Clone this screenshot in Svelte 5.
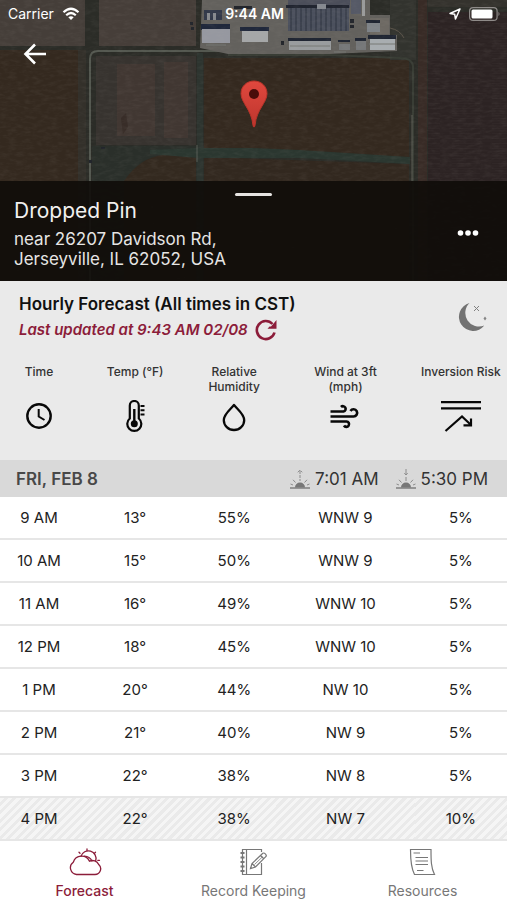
<script lang="ts">
  type Hour = {
    time: string;
    temp: number;
    humidity: number;
    wind: string;
    risk: number;
  };

  let hours: Hour[] = [
    { time: "9 AM", temp: 13, humidity: 55, wind: "WNW 9", risk: 5 },
    { time: "10 AM", temp: 15, humidity: 50, wind: "WNW 9", risk: 5 },
    { time: "11 AM", temp: 16, humidity: 49, wind: "WNW 10", risk: 5 },
    { time: "12 PM", temp: 18, humidity: 45, wind: "WNW 10", risk: 5 },
    { time: "1 PM", temp: 20, humidity: 44, wind: "NW 10", risk: 5 },
    { time: "2 PM", temp: 21, humidity: 40, wind: "NW 9", risk: 5 },
    { time: "3 PM", temp: 22, humidity: 38, wind: "NW 8", risk: 5 },
    { time: "4 PM", temp: 22, humidity: 38, wind: "NW 7", risk: 10 },
  ];
</script>

<div class="app">
  <header class="hero">
    <svg class="map" viewBox="0 0 507 281" preserveAspectRatio="xMidYMin slice" aria-hidden="true">
      <defs>
        <filter id="grain" x="0" y="0" width="100%" height="100%">
          <feTurbulence type="fractalNoise" baseFrequency="0.12 0.3" numOctaves="3" seed="4" />
          <feColorMatrix values="0 0 0 0 0.5  0 0 0 0 0.46  0 0 0 0 0.42  0.5 0 0 0 -0.2" />
        </filter>
        <pattern id="furrows" width="40" height="5" patternUnits="userSpaceOnUse">
          <path d="M0 1H26M12 3.500H40" stroke="#3a302f" stroke-width="1" />
        </pattern>
        <pattern id="roof" width="5" height="24" patternUnits="userSpaceOnUse">
          <path d="M1 0V24" stroke="#2c313d" stroke-width="1" />
        </pattern>
      </defs>
      <rect width="507" height="281" fill="#2b2c27" />
      <!-- fields -->
      <path d="M0 0H85V46H0Z" fill="#453e39" />
      <path d="M99 0H196V46H99Z" fill="#463e39" />
      <path d="M0 50H84V281H0Z" fill="#34291f" />
      <path d="M78 50H86V281H78Z" fill="#33302a" />
      <path d="M96 56H196V145H96Z" fill="#37332f" />
      <path d="M117 64H155V136H117ZM164 62H188V138H164Z" fill="#413732" />
      <path d="M121 118l5-5 2 14-5 7z" fill="#382d28" />
      <path d="M92 146H204V281H92Z" fill="#2a2f2a" />
      <path d="M124 181Q140 157 164 155L196 154V281H124Z" fill="#33291f" />
      <path d="M204 58H409V158L204 148Z" fill="#34291f" />
      <path d="M204 157L409 164V281H204Z" fill="#32281f" />
      <path d="M197 53H203V281H197Z" fill="#2d342f" />
      <path d="M198 148H252L300 150L410 157V164L300 158H198L150 154V150Z" fill="#2b3730" />
      <path d="M418 0H427V281H418Z" fill="#382b26" />
      <path d="M428 12H507V281H428Z" fill="#2c2323" />
      <path d="M428 20H507V181H428Z" fill="url(#furrows)" opacity="0.3" />
      <path d="M390 0H416V60H390Z" fill="#32332e" />
      <path d="M428 0H507V7H428Z" fill="#34322d" />
      <!-- roads -->
      <path d="M90 281V59Q90 51 98 51H228" fill="none" stroke="#545850" stroke-width="2" />
      <path d="M228 55H330L400 58Q412 58 413 66V281" fill="none" stroke="#393d35" stroke-width="2" />
      <path d="M412 115V181" stroke="#5c5c54" stroke-width="1" />
      <path d="M197 145V162" stroke="#565d55" stroke-width="1" />
      <path d="M390 28Q400 30 404 38" fill="none" stroke="#5a5349" stroke-width="1" />
      <!-- farm yard -->
      <path d="M202 0H370V15H390V35H397V51L330 54L228 54L200 48Z" fill="#63615d" />
      <path d="M370 18H389V34H370Z" fill="#6d6963" />
      <path d="M288 0H350V8H288Z" fill="#4b4e5a" />
      <path d="M288 7H349V31H288Z" fill="#4b505d" />
      <path d="M288 7H349V31H288Z" fill="url(#roof)" />
      <path d="M286 5H349V8H286Z" fill="#20242f" />
      <path d="M317 4H326V9H317Z" fill="#858990" />
      <path d="M351 0H361V14H351Z" fill="#555966" />
      <path d="M362 0H365V16H362Z" fill="#9a9b9b" />
      <path d="M204 10H222V20H204Z" fill="#32394a" />
      <path d="M207 13h3v7h-3zM213 13h3v7h-3z" fill="#86898e" />
      <path d="M201 24H230V30H201ZM240 27H269V31H240Z" fill="#20283b" />
      <path d="M202 29H230V43H202Z" fill="#9698a0" />
      <path d="M242 31H268V42H242Z" fill="#a5a7a8" />
      <path d="M288 38H331V41H288ZM338 40H350V42H338ZM355 38H366V41H355ZM368 35H396V39H368ZM366 20H380V23H366Z" fill="#1f2532" />
      <path d="M289 41H331V50H289Z" fill="#999c9e" />
      <path d="M339 44H350V50H339ZM356 41H366V50H356Z" fill="#757779" />
      <path d="M370 39H395V50H370Z" fill="#a8adb0" />
      <path d="M367 23H380V32H367Z" fill="#7e8388" />
      <path d="M350 19h4v4h-4zM350 25h4v3h-4zM234 6h18v3h-18zM281 41h3v4h-3zM190 22h3v3h-3zM191 27h3v3h-3zM101 147h4v2h-4zM89 160h3v3h-3z" fill="#22252b" />
      <path d="M290 46H330M206 45H226M334 52H346M369 44H395" stroke="#777875" stroke-width="1" />
      <rect width="507" height="281" filter="url(#grain)" opacity="0.3" />
    </svg>

    <svg class="pin" width="28" height="48" viewBox="0 0 28 48" role="img" aria-label="Dropped pin">
      <defs>
        <linearGradient id="pinFill" x1="0" y1="0" x2="0" y2="1">
          <stop offset="0" stop-color="#e0483e" />
          <stop offset="1" stop-color="#bd352d" />
        </linearGradient>
      </defs>
      <path d="M14 1C6.500 1 1 6.500 1 13.500C1 23 11.500 29 13 45.500C13.200 47.500 14.800 47.500 15 45.500C16.500 29 27 23 27 13.500C27 6.500 21.500 1 14 1Z" fill="url(#pinFill)" stroke="#b93329" stroke-width="1" />
      <circle cx="14" cy="14" r="5" fill="#4a0d0a" />
    </svg>

    <div class="status">
      <div class="status-left">
        <span>Carrier</span>
        <svg width="18" height="14" viewBox="0 0 18 14" aria-hidden="true">
          <path d="M1.500 5.200Q9 -1.700 16.500 5.200M4.200 8.200Q9 3.800 13.800 8.200" fill="none" stroke="#fff" stroke-width="2.200" />
          <path d="M6.300 10.300Q9 8.200 11.700 10.300L9 13Z" fill="#fff" />
        </svg>
      </div>
      <span class="clock">9:44 AM</span>
      <div class="status-right">
        <svg width="12" height="12" viewBox="0 0 12 12" aria-hidden="true">
          <path d="M11 1L1 5.500L5.700 6.300L6.500 11Z" fill="none" stroke="#fff" stroke-width="1.500" stroke-linejoin="round" />
        </svg>
        <svg width="32" height="14" viewBox="0 0 32 14" aria-hidden="true">
          <rect x="0.600" y="0.600" width="27.500" height="12.800" rx="3.500" fill="none" stroke="#8f8b89" stroke-width="1.200" />
          <rect x="2.500" y="2.500" width="21" height="9" rx="1.500" fill="#fff" />
          <path d="M29.500 4.800Q31.500 7 29.500 9.200Z" fill="#8f8b89" />
        </svg>
      </div>
    </div>

    <button class="back" aria-label="Back">
      <svg width="24" height="24" viewBox="0 0 24 24" aria-hidden="true">
        <path d="M23 12H3M12 2.500L2.500 12L12 21.500" fill="none" stroke="#fff" stroke-width="2.600" />
      </svg>
    </button>

    <div class="place">
      <button class="handle" aria-label="Expand map"></button>
      <div class="place-row">
        <div>
          <h1>Dropped Pin</h1>
          <p>near 26207 Davidson Rd,<br />Jerseyville, IL 62052, USA</p>
        </div>
        <button class="more" aria-label="More options">
          <svg width="22" height="8" viewBox="0 0 22 8" aria-hidden="true">
            <g fill="#fff">
              <circle cx="3.500" cy="4" r="2.800" />
              <circle cx="11" cy="4" r="2.800" />
              <circle cx="18.500" cy="4" r="2.800" />
            </g>
          </svg>
        </button>
      </div>
    </div>
  </header>

  <main>
    <div class="summary">
      <div>
        <h2>Hourly Forecast (All times in CST)</h2>
        <div class="updated">
          <span>Last updated at 9:43 AM 02/08</span>
          <button class="refresh" aria-label="Refresh">
            <svg width="22" height="22" viewBox="0 0 22 22" aria-hidden="true">
              <path d="M19.500 13.500A9 9 0 1 1 17.500 5" fill="none" stroke="#8c1d3a" stroke-width="2.600" />
              <path d="M21.500 1V9.800H12.500L14.500 7.600H16L19 4Z" fill="#8c1d3a" />
            </svg>
          </button>
        </div>
      </div>
      <svg width="30" height="30" viewBox="0 0 30 30" role="img" aria-label="Clear night">
        <path d="M11.500 1A14.200 14.200 0 1 0 26.300 23.500A13.700 13.700 0 0 1 11.500 1Z" fill="#727272" />
        <path d="M16 4L21 9M21 4L16 9" stroke="#808080" stroke-width="1" />
        <path d="M27 14.500l1.500 2-1.500 2-1.500-2z" fill="#858585" />
      </svg>
    </div>

    <table>
      <colgroup>
        <col class="col-time" />
        <col class="col-temp" />
        <col class="col-humidity" />
        <col class="col-wind" />
        <col />
      </colgroup>
      <thead>
        <tr class="labels">
          <th scope="col">Time</th>
          <th scope="col">Temp (°F)</th>
          <th scope="col">Relative<br />Humidity</th>
          <th scope="col">Wind at 3ft<br />(mph)</th>
          <th scope="col">Inversion Risk</th>
        </tr>
        <tr class="icons">
          <td>
            <svg width="42" height="32" viewBox="0 0 42 32" aria-hidden="true">
              <circle cx="21" cy="16" r="11.700" fill="none" stroke="#080808" stroke-width="2.400" />
              <path d="M20.700 9V16.500L26.500 20" fill="none" stroke="#080808" stroke-width="2" />
            </svg>
          </td>
          <td>
            <svg width="42" height="32" viewBox="0 0 42 32" aria-hidden="true">
              <path d="M15.800 18.500V5.500A4.500 4.500 0 0 1 24.800 5.500V18.500A7 7 0 1 1 15.800 18.500Z" fill="none" stroke="#080808" stroke-width="2.200" />
              <path d="M20.300 9V24" stroke="#080808" stroke-width="2.400" />
              <circle cx="20.300" cy="23.800" r="3.500" fill="#080808" />
              <path d="M26.500 6H30.500M26.500 10.300H30.500M26.500 14.600H30.500" stroke="#080808" stroke-width="2" />
            </svg>
          </td>
          <td>
            <svg width="42" height="32" viewBox="0 0 42 32" aria-hidden="true">
              <path d="M21 5C17.500 9.500 10.800 14 10.800 20.200A10.200 9.800 0 0 0 31.200 20.200C31.200 14 24.500 9.500 21 5Z" fill="none" stroke="#080808" stroke-width="2.300" stroke-linejoin="round" />
            </svg>
          </td>
          <td>
            <svg width="42" height="32" viewBox="0 0 42 32" aria-hidden="true">
              <g fill="none" stroke="#080808" stroke-width="2.600">
                <path d="M6.500 11.500H19.500A2.700 2.700 0 1 0 17 7" />
                <path d="M6.500 16.500H29.500A3.600 3.600 0 1 0 26.500 11" />
                <path d="M6.500 21.500H22.500A2.700 2.700 0 1 1 20 25.500" />
              </g>
            </svg>
          </td>
          <td>
            <svg width="42" height="32" viewBox="0 0 42 32" aria-hidden="true">
              <path d="M1 2.200H41M1 8.400H41" stroke="#080808" stroke-width="2.200" />
              <path d="M5.500 31L22 16.500L30.500 24.500M31 18.500V25.300H23.500" fill="none" stroke="#080808" stroke-width="2.200" />
            </svg>
          </td>
        </tr>
      </thead>
      <tbody>
        <tr class="day">
          <th colspan="5" scope="rowgroup">
            <div class="day-bar">
              <span class="date">FRI, FEB 8</span>
              <span class="sun">
                <svg width="20" height="20" viewBox="0 0 20 20" role="img" aria-label="Sunrise">
                  <path d="M0 19H20" stroke="#777" stroke-width="1.400" />
                  <path d="M5 18.500A5 5 0 0 1 15 18.500Z" fill="#777" />
                  <path d="M10 2V12M7.800 3.300L10 1L12.200 3.300" fill="none" stroke="#8c8c8c" stroke-width="1" stroke-dasharray="3 1" />
                  <path d="M5.500 13.500L3 10.800M14.500 13.500L17 10.800M3 16L0.500 15M17 16L19.500 15" stroke="#8c8c8c" stroke-width="1" />
                </svg>
                7:01 AM
              </span>
              <span class="sun">
                <svg width="20" height="20" viewBox="0 0 20 20" role="img" aria-label="Sunset">
                  <path d="M0 19H20" stroke="#777" stroke-width="1.400" />
                  <path d="M5 18.500A5 5 0 0 1 15 18.500Z" fill="#777" />
                  <path d="M10 0V6M10 8V12M8.300 4.200L10 6L11.700 4.200" fill="none" stroke="#8c8c8c" stroke-width="1" />
                  <path d="M5.500 13.500L3 10.800M14.500 13.500L17 10.800M3 16L0.500 15M17 16L19.500 15" stroke="#8c8c8c" stroke-width="1" />
                </svg>
                5:30 PM
              </span>
            </div>
          </th>
        </tr>
        {#each hours as hour}
          <tr class="hour" class:striped={hour.risk >= 10}>
            <th scope="row">{hour.time}</th>
            <td>{hour.temp}°</td>
            <td>{hour.humidity}%</td>
            <td>{hour.wind}</td>
            <td>{hour.risk}%</td>
          </tr>
        {/each}
      </tbody>
    </table>
  </main>

  <nav>
    <a href="#forecast" class="active" aria-current="page">
      <svg width="34" height="28" viewBox="0 0 34 28" aria-hidden="true">
        <g fill="none" stroke="currentColor" stroke-width="1.300" stroke-linecap="round">
          <path d="M8.500 26.500A6.800 6.800 0 0 1 5.300 14.200A8.700 8.700 0 0 1 21.500 13.200A6.800 6.800 0 0 1 30.700 16.500A5.700 5.700 0 0 1 27 26.500Z" />
          <path d="M13 8.300A7.300 7.300 0 0 1 27.700 12.700" />
          <path d="M16.500 8.200A9 9 0 0 1 24 13" />
          <path d="M19 1V2.500M11 4.300L12 5.300M27.500 4.300L26.500 5.300M29.800 12.300H31.500" />
        </g>
      </svg>
      Forecast
    </a>
    <a href="#records">
      <svg width="34" height="28" viewBox="0 0 34 28" aria-hidden="true">
        <g fill="none" stroke="currentColor" stroke-width="1.200">
          <path d="M24.500 4V1.500H5.500V26.500H24.500V15" />
          <path d="M9.500 1.500V26.500" />
          <path d="M3.500 5H7.500M3.500 9.500H7.500M3.500 14H7.500M3.500 18.500H7.500M3.500 23H7.500" stroke-width="1.800" />
          <path d="M13.500 20.500L15 15.500L25.800 5.300Q27 4.500 28.300 5.800Q30 7.500 28.800 8.700L18.500 19L13.500 20.500ZM15 15.500L18.500 19M23.500 7.500L26.800 10.700" />
          <path d="M17.500 16.500L25.500 8.800" stroke-width="0.800" />
        </g>
      </svg>
      Record Keeping
    </a>
    <a href="#resources">
      <svg width="34" height="28" viewBox="0 0 34 28" aria-hidden="true">
        <g fill="none" stroke="currentColor" stroke-width="1.200">
          <path d="M4.500 1.500H25C25 12 25 20 28.500 26.500H8.500C5 20 4.500 10 4.500 1.500Z" />
          <path d="M7.500 5H14M9.500 9.500H22M9.500 13H22M9.500 16.500H22M11 22.500H17.500" />
        </g>
      </svg>
      Resources
    </a>
  </nav>
</div>

<style>
  :global(body) {
    background: #fff;
    font-family: Inter, "Liberation Sans", sans-serif;
  }
  .app {
    display: flex;
    flex-direction: column;
    min-height: 100vh;
    color: #1c1c1c;
  }
  button {
    border: 0;
    padding: 0;
    background: none;
    cursor: pointer;
  }
  svg {
    display: block;
    flex-shrink: 0;
  }
  h1, h2, p {
    margin: 0;
  }
  .hero {
    position: relative;
    display: flex;
    flex-direction: column;
    color: #fff;
    overflow: hidden;
    background: #2b2c27;
  }
  .map {
    position: absolute;
    top: 0;
    left: 0;
    width: 100%;
    height: 100%;
  }
  .pin {
    position: absolute;
    top: 80px;
    left: 50%;
    transform: translateX(-50%);
  }
  .status {
    position: relative;
    display: grid;
    grid-template-columns: 1fr auto 1fr;
    align-items: center;
    padding: 5px 6px 3px 8px;
    font-size: 14px;
    line-height: 18px;
  }
  .status-left, .status-right {
    display: flex;
    align-items: center;
    gap: 8px;
  }
  .status-right {
    justify-content: flex-end;
  }
  .clock {
    font-weight: 600;
  }
  .back {
    position: relative;
    align-self: flex-start;
    margin: 16px 23px 115px;
  }
  .place {
    position: relative;
    display: flex;
    flex-direction: column;
    padding: 12px 28px 12px 14px;
    background: rgba(15, 12, 9, 0.9);
  }
  .handle {
    align-self: center;
    width: 37px;
    height: 3px;
    border-radius: 2px;
    background: #e6e4e2;
    margin-left: 14px;
  }
  .place-row {
    display: flex;
    align-items: center;
    justify-content: space-between;
    padding-top: 1px;
  }
  h1 {
    font-size: 21px;
    line-height: 28px;
    font-weight: 400;
    color: #f1f0ef;
    margin-bottom: 4px;
  }
  .place p {
    font-size: 17px;
    line-height: 20px;
    color: #e6e5e4;
  }
  .summary {
    display: flex;
    justify-content: space-between;
    align-items: center;
    padding: 12px 19px 8px;
    background: #eaeaea;
  }
  h2 {
    font-size: 17px;
    line-height: 22px;
    font-weight: 600;
    color: #111;
  }
  .updated {
    display: flex;
    align-items: center;
    gap: 7px;
    margin-top: 4px;
    font-size: 15px;
    line-height: 22px;
    font-weight: 600;
    font-style: italic;
    color: #8c1d3a;
  }
  table {
    width: 100%;
    table-layout: fixed;
    border-collapse: separate;
    border-spacing: 0;
    text-align: center;
  }
  .col-time {
    width: 15.4%;
  }
  .col-temp {
    width: 22.5%;
  }
  .col-humidity {
    width: 16.6%;
  }
  .col-wind {
    width: 27.3%;
  }
  th, td {
    padding: 0;
  }
  thead {
    background: #eaeaea;
  }
  .labels th {
    height: 45px;
    padding-top: 15px;
    box-sizing: border-box;
    vertical-align: top;
    font-size: 12px;
    line-height: 15px;
    font-weight: 500;
    color: #333;
    white-space: nowrap;
  }
  .icons td {
    padding: 6px 0 28px;
  }
  .icons svg {
    margin: 0 auto;
  }
  .day th {
    height: 37px;
    background: #d9d9d9;
  }
  .day-bar {
    display: flex;
    align-items: center;
    gap: 17px;
    padding: 0 19px 0 16px;
    font-size: 17px;
    line-height: 20px;
    font-weight: 400;
    color: #333;
  }
  .date {
    flex: 1;
    text-align: left;
    font-weight: 600;
    color: #484848;
  }
  .sun {
    display: flex;
    align-items: center;
    gap: 5px;
  }
  .hour th, .hour td {
    height: 43px;
    box-sizing: border-box;
    border-bottom: 2px solid #e6e6e6;
    font-size: 15px;
    line-height: 20px;
    font-weight: 400;
    color: #222;
  }
  .striped {
    background: repeating-linear-gradient(135deg, #f5f5f5 0 3px, #eaeaea 3px 6px);
  }
  nav {
    display: grid;
    grid-template-columns: repeat(3, 1fr);
    margin-top: auto;
    background: #fff;
  }
  nav a {
    display: flex;
    flex-direction: column;
    align-items: center;
    gap: 6px;
    padding: 7px 0 1px;
    font-size: 14px;
    line-height: 18px;
    color: #777;
    text-decoration: none;
  }
  nav .active {
    color: #8c1d3a;
    font-weight: 500;
  }
</style>
